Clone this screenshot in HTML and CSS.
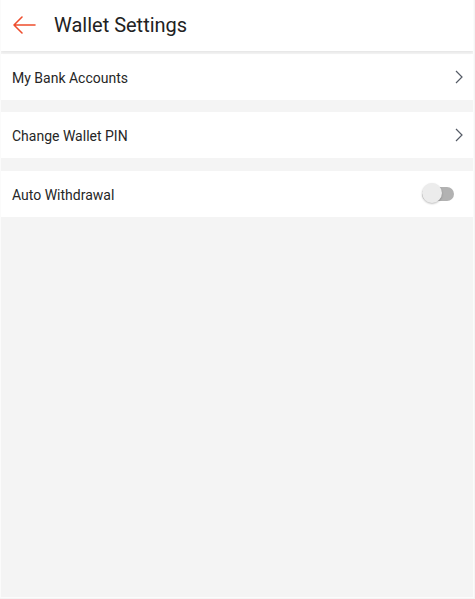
FILE: index.html
```html
<!DOCTYPE html>
<html>
<head>
<meta charset="utf-8">
<link rel="stylesheet" href="styles.css">
</head>
<body>
<div class="app">
  <header class="topbar">
    <svg class="back" width="24" height="20" viewBox="0 0 24 20">
      <path d="M23 10H2M10 2L2 10L10 18" fill="none" stroke="#ee4d2d" stroke-width="1.6" stroke-linecap="round" stroke-linejoin="round"/>
    </svg>
    <h1 class="title">Wallet Settings</h1>
  </header>
  <div class="list">
    <div class="row">
      <span class="label">My Bank Accounts</span>
      <svg class="chev" width="10" height="14" viewBox="0 0 10 14"><path d="M2 1L8 7L2 13" fill="none" stroke="#555b66" stroke-width="1.2"/></svg>
    </div>
    <div class="row">
      <span class="label">Change Wallet PIN</span>
      <svg class="chev" width="10" height="14" viewBox="0 0 10 14"><path d="M2 1L8 7L2 13" fill="none" stroke="#555b66" stroke-width="1.2"/></svg>
    </div>
    <div class="row">
      <span class="label">Auto Withdrawal</span>
      <span class="toggle"><span class="knob"></span></span>
    </div>
  </div>
</div>
</body>
</html>
```
FILE: styles.css
```css
html, body {
  margin: 0;
  padding: 0;
  background: #f4f4f4;
}
body {
  font-family: Roboto, "Noto Sans", Arial, sans-serif;
  color: #222;
}
.app {
  width: 474px;
  height: 598px;
  box-sizing: border-box;
  border-left: 1px solid #fbfbfb;
  border-right: 1px solid #fbfbfb;
  border-bottom: 1px solid #fbfbfb;
  background: #f4f4f4;
  overflow: hidden;
}
.topbar {
  height: 51px;
  background: #fff;
  display: flex;
  align-items: center;
  box-shadow: 0 1px 3px rgba(0,0,0,0.08);
  position: relative;
}
.back {
  margin-left: 11px;
  margin-top: -2px;
}
.title {
  margin: -2px 0 0 18px;
  font-size: 20px;
  font-weight: 400;
  color: #222;
}
.list {
  display: flex;
  flex-direction: column;
  gap: 12px;
  padding-top: 3px;
}
.row {
  height: 46px;
  background: #fff;
  display: flex;
  align-items: center;
  justify-content: space-between;
  padding: 0 9px 0 11px;
}
.row:nth-child(3) {
  margin-top: 1px;
}
.label {
  font-size: 14px;
  color: #262626;
  padding-top: 1px;
}
.chev {
  margin-top: -1px;
}
.toggle {
  position: relative;
  width: 32px;
  height: 14px;
  border-radius: 7px;
  background: #b2b2b2;
  margin-right: 10px;
}
.knob {
  position: absolute;
  left: 0;
  top: -4px;
  width: 20px;
  height: 20px;
  border-radius: 50%;
  background: #ececec;
  box-shadow: 0 1px 2px rgba(0,0,0,0.25);
}
```
